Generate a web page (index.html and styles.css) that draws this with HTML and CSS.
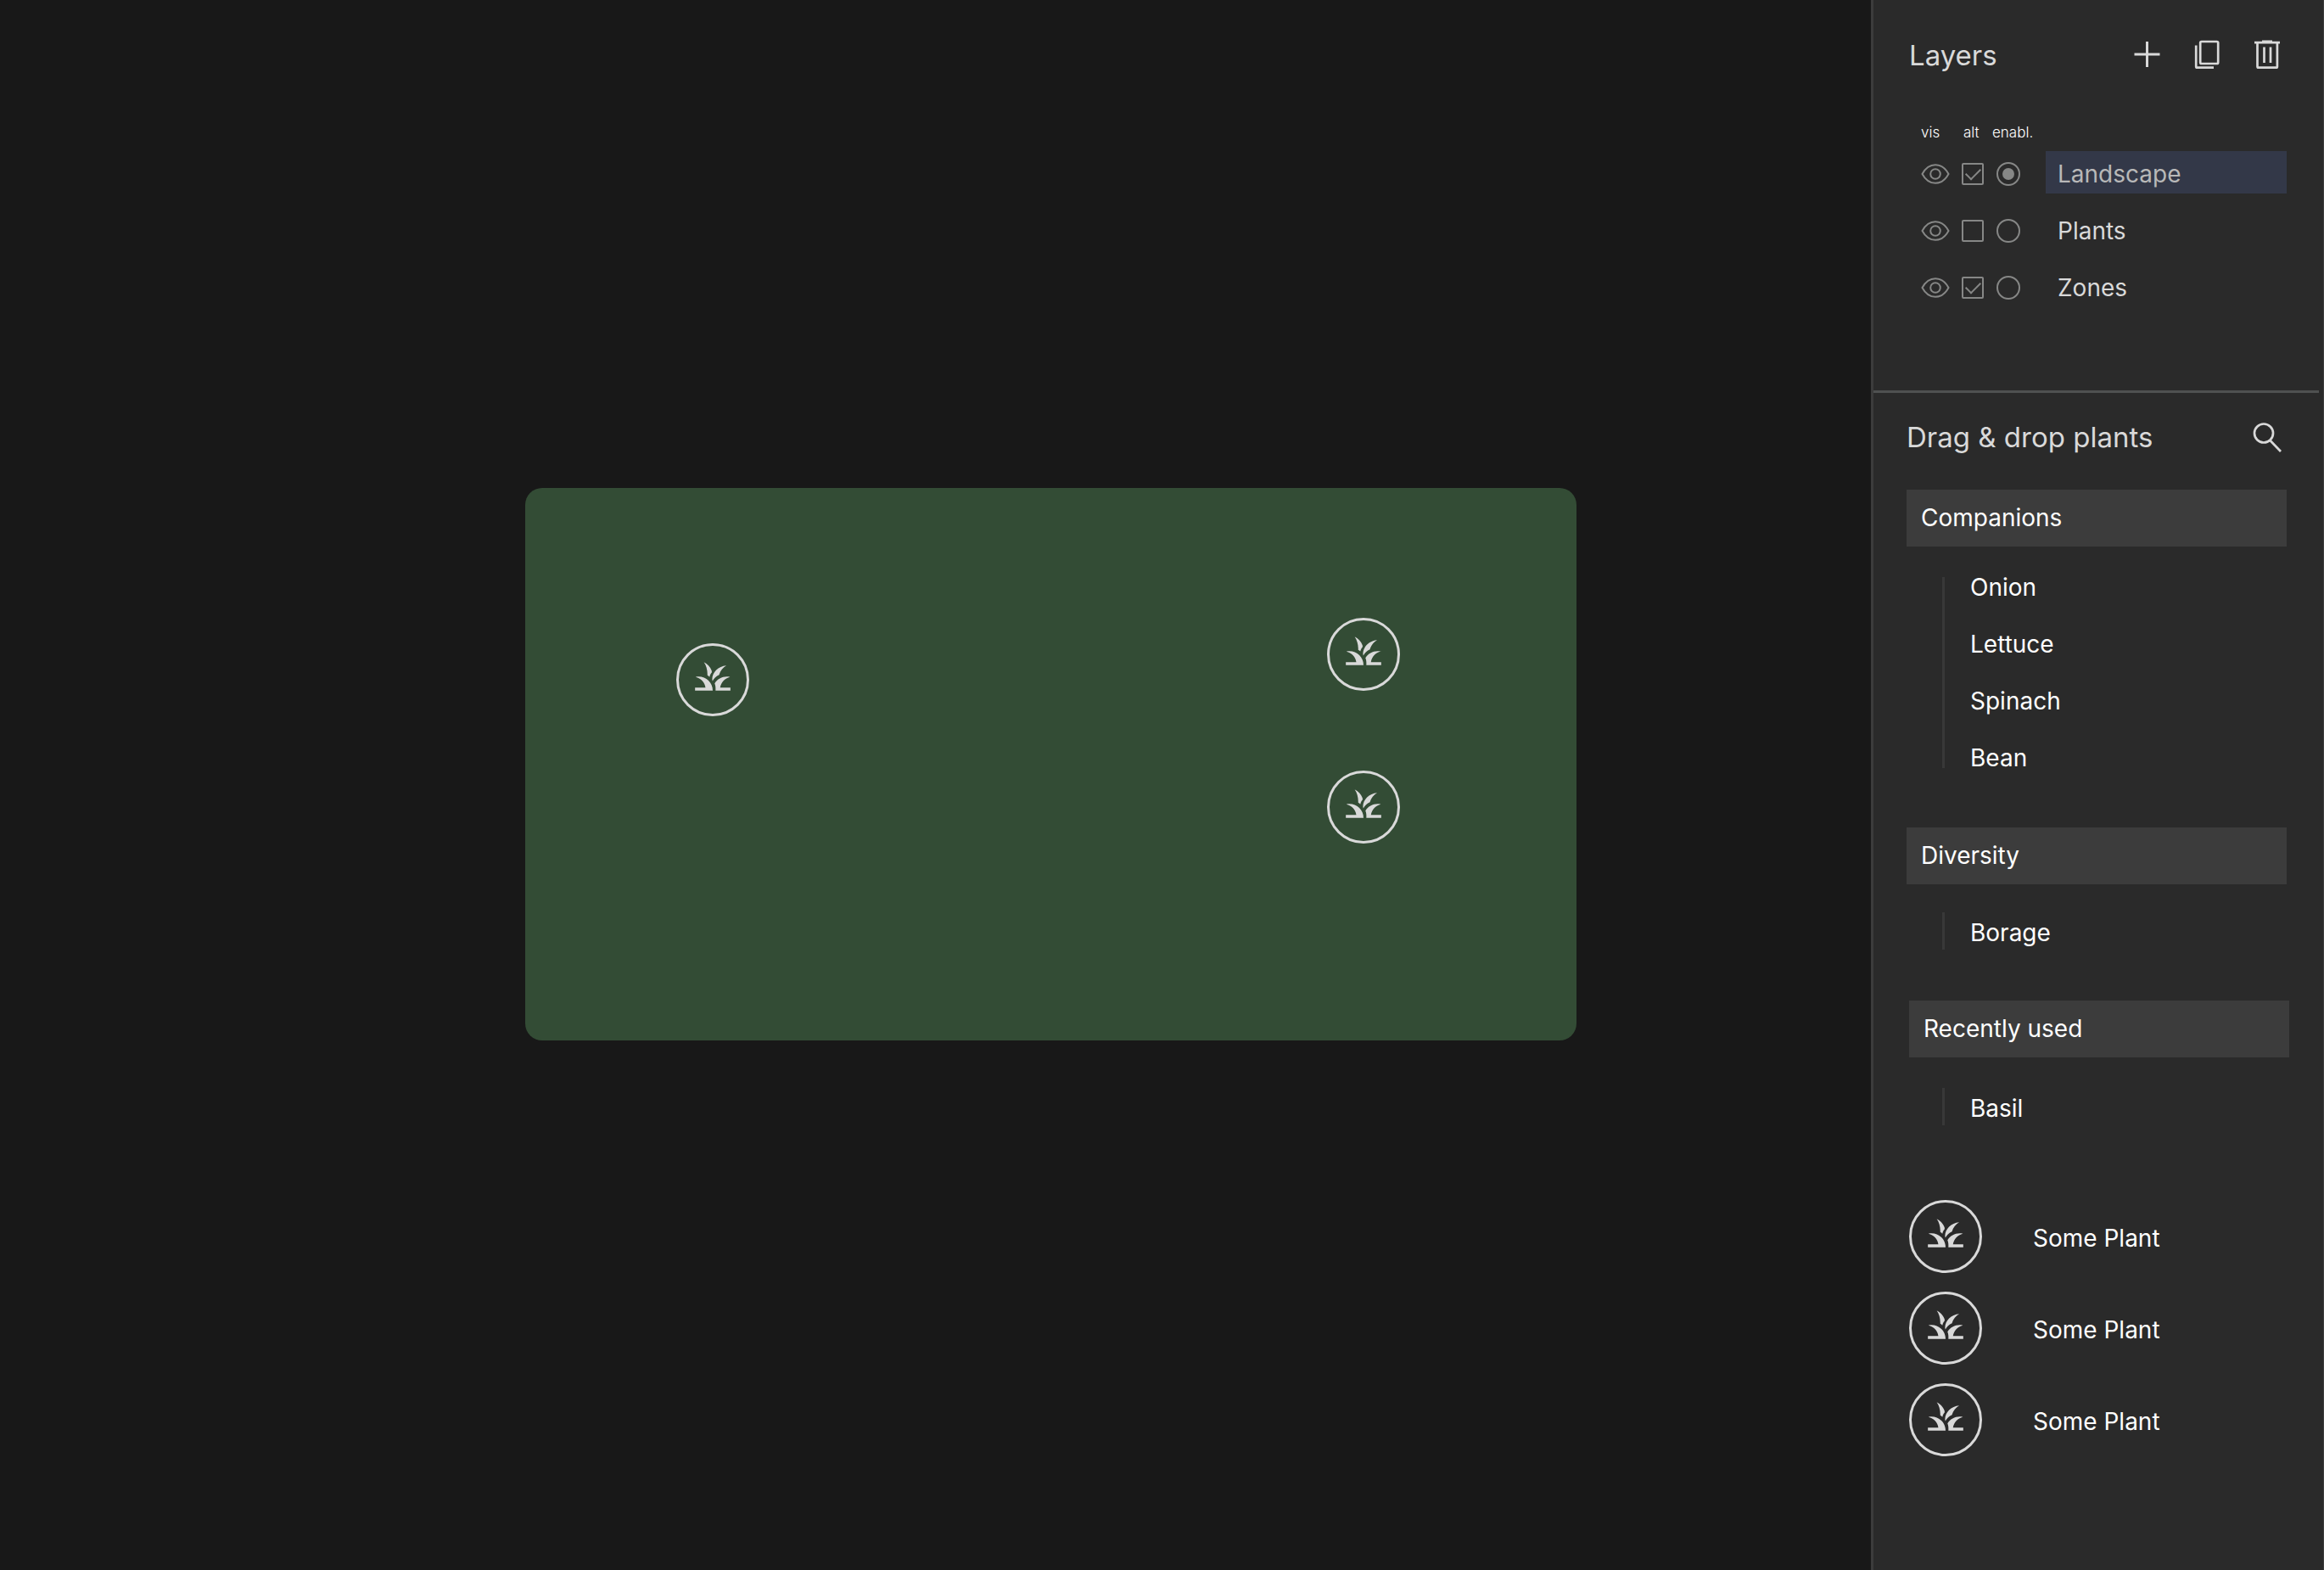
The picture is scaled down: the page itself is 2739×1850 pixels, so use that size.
FILE: index.html
```html
<!DOCTYPE html>
<html lang="en">
<head>
<meta charset="utf-8">
<title>Garden planner</title>
<link rel="stylesheet" href="styles.css">
</head>
<body>
<svg class="sprite" aria-hidden="true">
  <symbol id="grass" viewBox="0 0 24 24">
    <path d="M12 20H2v-1.6h5.9C7.6 15.3 5.3 13 2.3 12.3c.6-.2 1.100-.2 1.700-.2 4.400 0 8 3.500 8 7.900z"/>
    <path d="M21.800 12.300c-.6-.2-1.200-.2-1.800-.2-2.900 0-5.500 1.500-6.900 3.800.5 1.200.6 2.600.5 4.100H22v-1.600h-5.800c.5-3.100 2.600-5.400 5.600-6.100z"/>
    <path d="M19.700 5.900c-4.500.3-8 4-8 7.700 0 .4.100.7.200 1 .8-1.600 2.100-2.800 3.700-3.500.7-2.200 2.200-4.100 4.100-5.200z"/>
    <path d="M11.400 8.800C10.600 6.600 8.900 4.900 7 4c1.300 1.900 2 4.200 2 6.700v.7c.4.200.8.500 1.200.9.200-1.200.8-1.900 1.300-2.600z"/>
  </symbol>
  <symbol id="eye" viewBox="0 0 34 24">
    <path d="M1.500 12C5 5.500 11 1.200 17 1.200S29 5.500 32.500 12C29 18.500 23 22.800 17 22.800S5 18.500 1.500 12z"/>
    <circle cx="17" cy="12" r="5.800"/>
  </symbol>
</svg>
<div class="app">
  <main class="canvas">
    <div class="bed">
      <button class="pin pin-a" aria-label="Plant"><svg><use href="#grass"/></svg></button>
      <button class="pin pin-b" aria-label="Plant"><svg><use href="#grass"/></svg></button>
      <button class="pin pin-c" aria-label="Plant"><svg><use href="#grass"/></svg></button>
    </div>
  </main>
  <aside class="sidebar">
    <section class="layers">
      <header class="head">
        <h2>Layers</h2>
        <div class="tools">
          <button class="tool" aria-label="Add layer"><svg viewBox="0 0 34 34"><path d="M17.500 1v30M2.500 16h30"/></svg></button>
          <button class="tool" aria-label="Duplicate layer"><svg class="thin" viewBox="0 0 34 34"><rect x="9.200" y="1" width="21" height="26" rx="1.500"/><path d="M4.200 5.500V30.500q0 1.200 1.200 1.200H25"/></svg></button>
          <button class="tool" aria-label="Delete layer"><svg class="thin" viewBox="0 0 34 34"><path d="M2 2.200h30M11 .8h12M5.500 2v28.500q0 1.200 1.200 1.200h21q1.200 0 1.200-1.200V2M13.500 7.500V26M21 7.500V26"/></svg></button>
        </div>
      </header>
      <table class="layer-table">
        <thead>
          <tr><th class="c-vis">vis</th><th class="c-alt">alt</th><th class="c-en">enabl.</th><th></th></tr>
        </thead>
        <tbody>
          <tr>
            <td><button class="eye" aria-label="Toggle Landscape visibility"><svg><use href="#eye"/></svg></button></td>
            <td><input type="checkbox" aria-label="Landscape alt" checked></td>
            <td><input type="radio" name="layer" id="l1" checked></td>
            <td><label class="layer-name active" for="l1">Landscape</label></td>
          </tr>
          <tr>
            <td><button class="eye" aria-label="Toggle Plants visibility"><svg><use href="#eye"/></svg></button></td>
            <td><input type="checkbox" aria-label="Plants alt"></td>
            <td><input type="radio" name="layer" id="l2"></td>
            <td><label class="layer-name" for="l2">Plants</label></td>
          </tr>
          <tr>
            <td><button class="eye" aria-label="Toggle Zones visibility"><svg><use href="#eye"/></svg></button></td>
            <td><input type="checkbox" aria-label="Zones alt" checked></td>
            <td><input type="radio" name="layer" id="l3"></td>
            <td><label class="layer-name" for="l3">Zones</label></td>
          </tr>
        </tbody>
      </table>
    </section>
    <hr class="divider">
    <section class="plants">
      <header class="head">
        <h2>Drag &amp; drop plants</h2>
        <button class="tool" aria-label="Search plants"><svg class="thin" viewBox="0 0 34 34"><circle cx="13" cy="12.500" r="11"/><path d="M20.500 21L33 34"/></svg></button>
      </header>
      <div class="group companions">
        <h3>Companions</h3>
        <ul class="tree">
          <li>Onion</li>
          <li>Lettuce</li>
          <li>Spinach</li>
          <li>Bean</li>
        </ul>
      </div>
      <div class="group diversity">
        <h3>Diversity</h3>
        <ul class="tree single">
          <li>Borage</li>
        </ul>
      </div>
      <div class="group recent">
        <h3>Recently used</h3>
        <ul class="tree single">
          <li>Basil</li>
        </ul>
      </div>
      <ul class="plant-list">
        <li><span class="badge"><svg><use href="#grass"/></svg></span><span class="plant-name">Some Plant</span></li>
        <li><span class="badge"><svg><use href="#grass"/></svg></span><span class="plant-name">Some Plant</span></li>
        <li><span class="badge"><svg><use href="#grass"/></svg></span><span class="plant-name">Some Plant</span></li>
      </ul>
    </section>
  </aside>
</div>
</body>
</html>
```
FILE: styles.css
```css
* {
  box-sizing: border-box;
}

body {
  margin: 0;
  background: #181818;
  color: #fff;
  font: 400 28px/34px Inter, "Liberation Sans", sans-serif;
}

h2, h3, ul {
  margin: 0;
  padding: 0;
  font-weight: inherit;
  list-style: none;
}

button {
  padding: 0;
  border: 0;
  background: none;
  color: #d9d9d9;
}

svg {
  display: block;
}

.sprite {
  position: absolute;
  width: 0;
  height: 0;
}

.app {
  display: grid;
  grid-template-columns: 1fr 534px;
  min-height: 100vh;
}

/* Canvas */
.canvas {
  position: relative;
}

.bed {
  position: absolute;
  left: 619px;
  top: 575px;
  width: 1239px;
  height: 651px;
  border-radius: 20px;
  background: #334c35;
}

.pin,
.badge {
  display: flex;
  justify-content: center;
  width: 86px;
  height: 86px;
  padding-top: 11px;
  border: 3px solid #d9d9d9;
  border-radius: 50%;
}

.pin svg,
.badge svg {
  width: 50px;
  height: 50px;
  fill: #d9d9d9;
}

.pin {
  position: absolute;
}

.pin-a {
  left: 178px;
  top: 183px;
}

.pin-b {
  left: 945px;
  top: 153px;
}

.pin-c {
  left: 945px;
  top: 333px;
}

/* Sidebar */
.sidebar {
  border-left: 3px solid #3c3c3c;
  border-right: 1px solid #3c3c3c;
  background: #2a2a2a;
}

.layers {
  padding: 44px 43px 81px 42px;
}

.plants {
  padding: 31px 43px 40px 39px;
}

.head {
  display: flex;
  align-items: center;
  justify-content: space-between;
  padding-right: 6px;
  color: #d9d9d9;
}

h2 {
  font-size: 33px;
  line-height: 42px;
}

.tools {
  display: flex;
  gap: 37px;
}

.tool,
.tool svg {
  width: 34px;
  height: 34px;
}

.tool svg {
  overflow: visible;
  fill: none;
  stroke: #d9d9d9;
  stroke-width: 3;
}

.tool .thin {
  stroke-width: 2.7;
}

.layer-table {
  width: 100%;
  margin-top: 60px;
  padding-left: 14px;
  border-spacing: 0;
  table-layout: fixed;
}

th {
  padding: 0 0 12px;
  font-size: 17px;
  line-height: 20px;
  font-weight: 300;
  text-align: left;
}

.c-vis {
  width: 48px;
}

.c-alt {
  width: 36px;
  padding-left: 2px;
}

.c-en {
  width: 63px;
}

td {
  padding: 2px 0 16px;
}

td:last-child {
  padding: 0 0 17px;
}

.eye {
  display: block;
}

.eye svg {
  width: 34px;
  height: 24px;
  fill: none;
  stroke: #868786;
  stroke-width: 2;
}

input {
  display: grid;
  place-content: center;
  appearance: none;
  margin: 0;
  border: 2px solid #868786;
}

input[type="checkbox"] {
  width: 26px;
  height: 26px;
  border-radius: 2px;
}

input[type="checkbox"]:checked::before {
  content: "";
  width: 15px;
  height: 8px;
  margin-bottom: 4px;
  border: solid #868786;
  border-width: 0 0 2px 2px;
  transform: rotate(-45deg);
}

input[type="radio"] {
  width: 28px;
  height: 28px;
  margin-left: 5px;
  border-radius: 50%;
}

input[type="radio"]:checked::before {
  content: "";
  width: 14px;
  height: 14px;
  border-radius: 50%;
  background: #868786;
}

.layer-name {
  display: block;
  padding: 10px 14px 6px;
  color: #d9d9d9;
}

.layer-name.active {
  background: #333848;
  color: #b8b8b8;
}

.divider {
  height: 3px;
  margin: 0 5px 0 0;
  border: 0;
  background: #4f5151;
}

.group h3 {
  padding: 16px 17px 17px;
  background: #3c3c3c;
  font-size: 28px;
}

.companions {
  margin-top: 41px;
}

.diversity {
  margin-top: 70px;
}

.recent {
  margin: 60px -3px 0 3px;
}

.tree {
  display: flex;
  flex-direction: column;
  gap: 43px;
  margin: 36px 0 0 42px;
  padding-left: 30px;
  border-left: 3px solid #383838;
  line-height: 24px;
}

.tree.single {
  padding-top: 12px;
  padding-bottom: 8px;
}

.diversity .tree {
  margin-top: 33px;
}

.recent .tree {
  margin-left: 39px;
}

.plant-list {
  display: grid;
  gap: 22px;
  margin: 88px 0 0 3px;
}

.plant-list li {
  display: flex;
  align-items: center;
  gap: 60px;
}

.plant-name {
  padding-top: 3px;
}
```
